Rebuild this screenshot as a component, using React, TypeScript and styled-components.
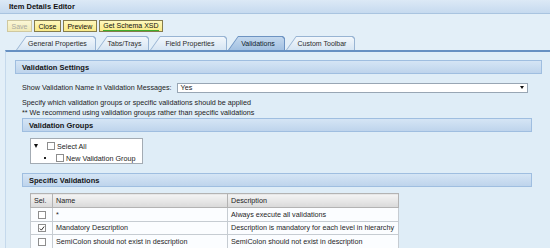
import React from 'react';
import styled, { createGlobalStyle } from 'styled-components';

const GlobalStyle = createGlobalStyle`
  html, body {
    margin: 0;
    padding: 0;
    background: #e3eff8;
  }
  body {
    font-family: 'Liberation Sans', Arial, sans-serif;
    font-size: 7.2px;
    color: #222;
  }
`;

const tabs = [
  { label: 'General Properties', width: 80 },
  { label: 'Tabs/Trays', width: 52 },
  { label: 'Field Properties', width: 77 },
  { label: 'Validations', width: 57, active: true },
  { label: 'Custom Toolbar', width: 69 }
];

const validations = [
  { name: '*', description: 'Always execute all validations', checked: false },
  { name: 'Mandatory Description', description: 'Description is mandatory for each level in hierarchy', checked: true },
  {
    name: 'SemiColon should not exist in description',
    description: 'SemiColon should not exist in description',
    checked: false
  }
];

const CheckMark = () => (
  <svg width="7" height="7" viewBox="0 0 7 7">
    <polyline points="1,3.6 2.8,5.4 6,1.2" fill="none" stroke="#222" strokeWidth="1.1" />
  </svg>
);

export default function App() {
  return (
    <Page>
      <GlobalStyle />
      <TitleBar>Item Details Editor</TitleBar>
      <Toolbar>
        <ToolButton disabled>Save</ToolButton>
        <ToolButton>Close</ToolButton>
        <ToolButton>Preview</ToolButton>
        <ToolButton>
          <Underlined>Get Schema XSD</Underlined>
        </ToolButton>
      </Toolbar>
      <TabStrip>
        {tabs.map((tab) => (
          <Tab key={tab.label} $width={tab.width} $active={!!tab.active}>
            <TabInner $active={!!tab.active}>{tab.label}</TabInner>
          </Tab>
        ))}
      </TabStrip>
      <Panel>
        <SectionHeader>Validation Settings</SectionHeader>
        <SectionBody>
          <FieldRow>
            <span>Show Validation Name in Validation Messages:</span>
            <Select>
              <span>Yes</span>
              <Arrow />
            </Select>
          </FieldRow>
          <Note $first>Specify which validation groups or specific validations should be applied</Note>
          <Note>** We recommend using validation groups rather than specific validations</Note>
          <SubHeader>Validation Groups</SubHeader>
          <TreeBox>
            <TreeRow $indent={3}>
              <Expander />
              <Box />
              <span>Select All</span>
            </TreeRow>
            <TreeRow $indent={13}>
              <Bullet />
              <Box />
              <span>New Validation Group</span>
            </TreeRow>
          </TreeBox>
          <SubHeader $gap={9}>Specific Validations</SubHeader>
          <Grid>
            <colgroup>
              <col style={{ width: 22 }} />
              <col style={{ width: 175 }} />
              <col style={{ width: 171 }} />
            </colgroup>
            <thead>
              <tr>
                <HeadCell>Sel.</HeadCell>
                <HeadCell>Name</HeadCell>
                <HeadCell>Description</HeadCell>
              </tr>
            </thead>
            <tbody>
              {validations.map((v) => (
                <tr key={v.name}>
                  <Cell $center>
                    <Box>{v.checked && <CheckMark />}</Box>
                  </Cell>
                  <Cell>{v.name}</Cell>
                  <Cell>{v.description}</Cell>
                </tr>
              ))}
            </tbody>
          </Grid>
        </SectionBody>
      </Panel>
    </Page>
  );
}

const Page = styled.div`
  width: 550px;
  height: 248px;
  overflow: hidden;
  display: flex;
  flex-direction: column;
  background: #e3eff8;
`;

const TitleBar = styled.div`
  flex: none;
  height: 13px;
  display: flex;
  align-items: center;
  padding-left: 9px;
  background: linear-gradient(#dce9f6, #c6daef);
  border-bottom: 1px solid #a9c4e0;
  font-weight: bold;
  font-size: 7.5px;
  color: #111;
`;

const Toolbar = styled.div`
  flex: none;
  display: flex;
  gap: 2px;
  padding: 6px 0 0 7px;
`;

const ToolButton = styled.div<{ disabled?: boolean }>`
  box-sizing: border-box;
  height: 12px;
  display: flex;
  align-items: center;
  padding: 0 3.5px;
  background: ${(p) => (p.disabled ? 'linear-gradient(#fbf7d6, #f1eab8)' : 'linear-gradient(#fff8bd, #f9ea86)')};
  border: 1px solid ${(p) => (p.disabled ? '#cfc8a0' : '#857c4e')};
  color: ${(p) => (p.disabled ? '#a9a9a0' : '#111')};
  font-size: 7px;
`;

const Underlined = styled.span`
  border-bottom: 1px solid #3fae2a;
  line-height: 8px;
`;

const TabStrip = styled.div`
  flex: none;
  display: flex;
  gap: 1px;
  margin-top: 4px;
  padding-left: 16px;
  height: 14px;
`;

const Tab = styled.div<{ $width: number; $active: boolean }>`
  box-sizing: border-box;
  width: ${(p) => p.$width}px;
  height: 14px;
  padding: 1px 1px 0 1px;
  background: ${(p) => (p.$active ? '#6d93c2' : '#98b4d3')};
  clip-path: polygon(0 100%, 10px 0, calc(100% - 2px) 0, 100% 2px, 100% 100%);
`;

const TabInner = styled.div<{ $active: boolean }>`
  height: 100%;
  display: flex;
  align-items: center;
  justify-content: center;
  padding-left: 3px;
  font-size: 7px;
  color: ${(p) => (p.$active ? '#0e1b2c' : '#2b2b2b')};
  background: ${(p) => (p.$active ? 'linear-gradient(#c3d8ee, #a3c1e2)' : 'linear-gradient(#f2f7fc, #d6e5f3)')};
  clip-path: polygon(0 100%, 9.3px 0, calc(100% - 2px) 0, 100% 2px, 100% 100%);
`;

const Panel = styled.div`
  flex: 1;
  margin-left: 5px;
  padding: 8px 8px 0 9px;
  border-top: 2px solid #6690c2;
  border-left: 1px solid #c5d9ec;
  background: #dfedf7;
`;

const SectionHeader = styled.div`
  box-sizing: border-box;
  height: 14px;
  display: flex;
  align-items: center;
  padding-left: 6px;
  background: linear-gradient(#d5e5f5, #bed4ec);
  border: 1px solid #9fbee0;
  font-weight: bold;
  font-size: 7.5px;
  color: #141414;
`;

const SectionBody = styled.div`
  padding: 0 10px 0 7px;
`;

const FieldRow = styled.div`
  display: flex;
  align-items: center;
  gap: 5px;
  height: 11px;
  margin-top: 8px;
`;

const Select = styled.div`
  box-sizing: border-box;
  flex: 1;
  height: 10px;
  margin-right: 4px;
  display: flex;
  align-items: center;
  justify-content: space-between;
  padding: 0 3px;
  background: #fff;
  border: 1px solid #98a6b4;
`;

const Arrow = styled.span`
  width: 0;
  height: 0;
  border-left: 2.5px solid transparent;
  border-right: 2.5px solid transparent;
  border-top: 3px solid #111;
`;

const Note = styled.div<{ $first?: boolean }>`
  line-height: 10px;
  margin-top: ${(p) => (p.$first ? 5 : 0)}px;
`;

const SubHeader = styled(SectionHeader)<{ $gap?: number }>`
  margin-top: ${(p) => p.$gap ?? 0}px;
`;

const TreeBox = styled.div`
  box-sizing: border-box;
  width: 113px;
  height: 26px;
  margin: 6px 0 0 8px;
  padding-top: 1px;
  background: #fff;
  border: 1px solid #a3abb3;
`;

const TreeRow = styled.div<{ $indent: number }>`
  height: 12px;
  display: flex;
  align-items: center;
  padding-left: ${(p) => p.$indent}px;
  gap: 2px;
`;

const Expander = styled.span`
  width: 0;
  height: 0;
  margin-right: 7px;
  border-left: 2.5px solid transparent;
  border-right: 2.5px solid transparent;
  border-top: 4px solid #111;
`;

const Bullet = styled.span`
  width: 2px;
  height: 2px;
  margin-right: 8px;
  background: #222;
`;

const Box = styled.span`
  box-sizing: border-box;
  width: 8px;
  height: 8px;
  display: inline-flex;
  align-items: center;
  justify-content: center;
  vertical-align: middle;
  background: #fff;
  border: 1px solid #8d8d8d;
`;

const Grid = styled.table`
  width: 368px;
  margin: 6px 0 0 8px;
  border-collapse: collapse;
  table-layout: fixed;
  border: 1px solid #a9a9a9;
`;

const HeadCell = styled.th`
  height: 13px;
  padding: 0 0 0 3px;
  text-align: left;
  font-weight: normal;
  color: #222;
  background: linear-gradient(#f4f4f4, #d9d9d9);
  border: 1px solid #b3b3b3;
`;

const Cell = styled.td<{ $center?: boolean }>`
  height: 12.5px;
  padding: 0 0 0 ${(p) => (p.$center ? 0 : 3)}px;
  text-align: ${(p) => (p.$center ? 'center' : 'left')};
  white-space: nowrap;
  overflow: hidden;
  background: #fbfdff;
  border: 1px solid #c6ccd2;
  color: #1e1e1e;
`;
